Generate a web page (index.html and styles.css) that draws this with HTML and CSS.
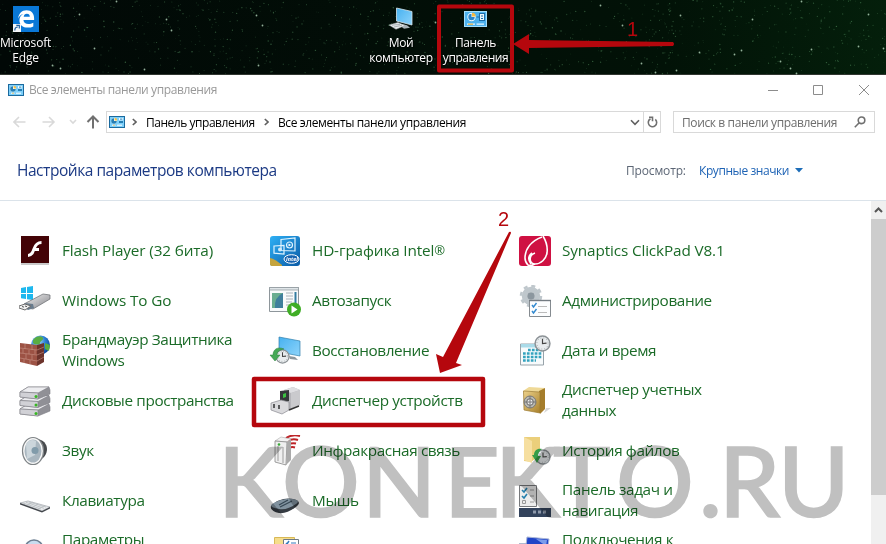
FILE: index.html
```
<!DOCTYPE html>
<html lang="ru">
<head>
<meta charset="utf-8">
<title>Все элементы панели управления</title>
<link rel="stylesheet" href="styles.css">
</head>
<body>
<svg width="0" height="0" class="defs">
  <defs>
    <linearGradient id="metal" x1="0" y1="0" x2="1" y2="1"><stop offset="0" stop-color="#f4f4f4"/><stop offset="1" stop-color="#85858a"/></linearGradient>
    <linearGradient id="sky" x1="0" y1="0" x2="1" y2="1"><stop offset="0" stop-color="#2eb0f5"/><stop offset="1" stop-color="#0b5ba6"/></linearGradient>
    <linearGradient id="screen" x1="0" y1="0" x2="1" y2="1"><stop offset="0" stop-color="#46b1f0"/><stop offset="1" stop-color="#8ed4fb"/></linearGradient>
    <linearGradient id="gold" x1="0" y1="0" x2="1" y2="1"><stop offset="0" stop-color="#edd28a"/><stop offset="1" stop-color="#a8802c"/></linearGradient>
    <radialGradient id="globe" cx=".35" cy=".3" r=".8"><stop offset="0" stop-color="#b8e2ff"/><stop offset=".5" stop-color="#2a7fd4"/><stop offset="1" stop-color="#0b3c8c"/></radialGradient>
    <symbol id="panel" viewBox="0 0 16 12" preserveAspectRatio="none">
      <rect width="16" height="12" fill="#1b6a9e"/><rect x="1" y="1" width="14" height="10" fill="#7ed0fa"/>
      <circle cx="5" cy="5" r="2.8" fill="#fff"/><path d="M5 5V2.2A2.8 2.8 0 1 0 7.8 5Z" fill="#267fb5"/><path d="M5.600 4.400V1.800A2.600 2.600 0 0 1 8.200 4.400Z" fill="#f5c04a"/>
      <rect x="10" y="2" width="4" height="2.3" fill="#f5fbff"/><rect x="11" y="2.6" width="2.4" height="1" fill="#267fb5"/><rect x="10" y="5" width="4" height="2" fill="#267fb5"/>
      <path d="M3 9.200h3.500M8 9.200h5" stroke="#fff"/><path d="M5 8.600v1.400" stroke="#f0b030"/>
    </symbol>
    <symbol id="panel-large" viewBox="0 0 23 16">
      <rect width="23" height="16" fill="#a6dffc"/><rect x="1" y="1" width="21" height="14" fill="#4db2ee"/>
      <circle cx="7.500" cy="6" r="4.200" fill="#f4fbff"/><path d="M7.500 6V2.800A3.200 3.200 0 1 0 10.700 6Z" fill="#2b86c9"/><path d="M8 5.500V1.800A3.700 3.700 0 0 1 11.700 5.500Z" fill="#f5b941"/>
      <path d="M12.500 6h2.500" stroke="#1d6ca6"/><rect x="15.500" y="2.500" width="5" height="7" fill="#eaf8ff" stroke="#1d6ca6"/><path d="M17 5h2M17 7.500h2" stroke="#1d6ca6"/>
      <path d="M3 13.200h8M12.500 13.200H20" stroke="#e9f7ff" stroke-width="1.300"/><path d="M4 13.200h5" stroke="#e5b44a" stroke-width="1.300"/>
    </symbol>
    <symbol id="clock" viewBox="0 0 16 16">
      <circle cx="8" cy="8" r="7" fill="#e8ecee" stroke="#8c9296" stroke-width="1.400"/><circle cx="8" cy="8" r="5.300" fill="none" stroke="#8c9296" stroke-width=".8" stroke-dasharray=".8 2"/><path d="M8 3.500V8l3.800-.4" fill="none" stroke="#444" stroke-width="1.100"/>
    </symbol>
  </defs>
</svg>

<header class="desktop">
  <svg class="stars" id="stars" width="886" height="75"></svg>
  <div class="shortcut edge">
    <svg width="26" height="26" viewBox="0 0 26 26"><rect width="26" height="26" fill="#0a78d7"/><path d="M5.200 12.600C5.600 7.400 8.900 4.200 13.500 4.200c5 0 7.600 3.500 7.600 8v1.900H10.400c.2 2.800 2.300 4 5 4 1.800 0 3.500-.5 4.900-1.300v3.600c-1.500.8-3.500 1.200-5.600 1.200-5 0-8.300-2.900-8.300-7.400 0-2.800 1.500-5 4-6.200-2.500.4-4.200 2-5.200 4.600zM10.700 10.800h6.100c0-2-1-3.100-2.900-3.100s-3 1.200-3.200 3.100z" fill="#fff"/><rect x="0" y="18" width="8" height="8" fill="#f4f6f8"/><path d="M1.800 24.500c0-2.500 1-3.500 3-3.500M3.300 19.400h3v3" fill="none" stroke="#1d5fa0" stroke-width="1.200"/></svg>
    <span>Microsoft</span><span>Edge</span>
  </div>
  <div class="shortcut pc">
    <svg width="26" height="24" viewBox="0 0 26 24"><path d="M8.500 1 24 4.500V18L8.500 14Z" fill="url(#screen)" stroke="#d6e4ec" stroke-width=".8"/><path d="M14 17l5 1.200 3 2.500-6 1-2.500-2z" fill="#a9b3b8"/><path d="M1 18l9-2.500 7 3-9 3.800z" fill="#e6eaec" stroke="#a7adb1" stroke-width=".5"/><path d="M4 18.200l8-.8M6 20l8-1.700" stroke="#abb2b6"/></svg>
    <span>Мой</span><span>компьютер</span>
  </div>
  <div class="shortcut cp">
    <svg width="23" height="16"><use href="#panel-large"/></svg>
    <span>Панель</span><span>управления</span>
  </div>
</header>

<main class="window">
  <div class="titlebar">
    <svg width="16" height="12"><use href="#panel"/></svg>
    <span class="title">Все элементы панели управления</span>
    <svg class="controls" width="104" height="12" viewBox="0 0 104 12" fill="none" stroke="#8c8c8c"><path d="M1 6.500h10M46.500 1.500h9v9h-9zM92 1l10 10M102 1 92 11"/></svg>
  </div>

  <nav class="navbar">
    <svg width="92" height="16" viewBox="0 0 92 16" fill="none" stroke="#d9d9d9" stroke-width="1.600"><path d="M6 3 1 8l5 5M1 8h11.500M36 3l5 5-5 5M41 8H29.500"/><path d="M57 6l3 3 3-3"/><path d="M74.500 8l5.500-5.500L85.500 8M80 3v11.500" stroke="#707070" stroke-width="2"/></svg>
    <div class="address">
      <svg width="16" height="12"><use href="#panel"/></svg>
      <svg class="sep" width="5" height="8" viewBox="0 0 5 8"><path d="M.8 1 4 4 .8 7"/></svg>
      <span class="crumb-root">Панель управления</span>
      <svg class="sep" width="5" height="8" viewBox="0 0 5 8"><path d="M.8 1 4 4 .8 7"/></svg>
      <span class="crumb-all">Все элементы панели управления</span>
      <svg class="drop" width="10" height="7" viewBox="0 0 10 7"><path d="M1 1.300l4 4 4-4"/></svg>
      <div class="refresh"><svg width="11" height="12" viewBox="0 0 11 12" fill="none" stroke="#707070" stroke-width="1.600"><path d="M3.500 2.800A4.200 4.200 0 1 0 8.300 3.400M2 1.200h3.500v4"/></svg></div>
    </div>
    <div class="search"><span>Поиск в панели управления</span>
      <svg width="12" height="12" viewBox="0 0 12 12" fill="none" stroke="#707070" stroke-width="1.600"><circle cx="7.500" cy="4.300" r="3.300"/><path d="M5.200 6.800.8 11.200"/></svg></div>
  </nav>

  <div class="heading">
    <h1>Настройка параметров компьютера</h1>
    <span class="view">Просмотр:</span>
    <a class="mode">Крупные значки</a>
    <svg width="8" height="5"><path d="M0 0h8L4 4.500z" fill="#1d6db8"/></svg>
  </div>

  <div class="content">
    <div class="grid">
      <div class="item latin"><svg viewBox="0 0 32 32"><rect x="2" y="2" width="28" height="28" fill="#c9c9c9"/><rect x="2" y="1" width="28" height="27" fill="#430306"/><path d="M22.500 7.500c-5 0-6.500 3.500-7.500 6.500-1.200 4-2.500 6.500-6 6.500" fill="none" stroke="#fff" stroke-width="3"/><path d="M14 14.500h6" stroke="#fff" stroke-width="3"/></svg><span>Flash Player (32 бита)</span></div>
      <div class="item latin"><svg viewBox="0 0 32 32"><rect x="1" y="1" width="30" height="30" rx="3" fill="url(#sky)"/><path d="M1 23q5 1 12 7v1H3q-2 0-2-2z" fill="#c5a43d"/><g fill="none" stroke="#dff4ff" stroke-width="1.200"><path d="M12 4.500 26 3v13l-14-.5z"/><path d="M5 11l10-.5V19l-10-.8z"/><circle cx="20.500" cy="10" r="3"/></g><path d="M19.500 8.500v3l2.600-1.500z" fill="#fff"/><circle cx="11" cy="14.500" r="2" fill="#cfeafa"/><ellipse cx="22.500" cy="24" rx="7.500" ry="4.300" fill="#1763b0" stroke="#fff"/><text class="intel" x="17" y="26">intel</text></svg><span>HD-графика Intel<small>®</small></span></div>
      <div class="item latin"><svg viewBox="0 0 32 32"><rect y="1" width="32" height="30" rx="3" fill="#cf1142"/><path d="M23 2C12 6 6 14 6 23c0 3 1 5 3 7 2 1 5 0 7-1M12 29c-4-5-2-9 1-11M24 1c3 5 5 10 4 17-1 6-6 11-12 11-4 0-6-4-4-8q1-2 4-3" fill="none" stroke="#fff" stroke-width="1.600"/></svg><span>Synaptics ClickPad V8.1</span></div>

      <div class="item latin"><svg viewBox="0 0 32 32"><path d="M2 3l5-1v6H2zM8 2l6-1v7H8zM2 9h5v5l-5-.8zM8 9h6v6l-6-.8z" fill="#1eb8ee"/><path d="M5 19 24 9l7 1v4L14 24l-6-1z" fill="url(#metal)" stroke="#66696d" stroke-width=".7"/><path d="M6 18l8 1 1 4-6 2-5-3z" fill="#687b8c"/><path d="M0 21l6-2 6 2-6 4-6-2z" fill="#f1f1f1" stroke="#6c6c6c"/><path d="M3 21.500l2 .6M6 21l2 .6" stroke="#555"/></svg><span>Windows To Go</span></div>
      <div class="item"><svg viewBox="0 0 32 32"><path d="M.5 2.500h29v24H.5z" fill="#f8fafb" stroke="#8e969b"/><path d="M.5 2.500h29v2.500H.5z" fill="#dfe5e8" stroke="#8e969b" stroke-width=".7"/><path d="M3 8h11v15H3z" fill="#3f7f9c"/><path d="M3 23V8h11Q5 12 6 23z" fill="#69ad90"/><path d="M17 8h7M17 11h7M17 14h7M17 17h6M17 20h3" stroke="#a8b2b8"/><path d="M26.500 7v11" stroke="#347ca0" stroke-width="2"/><circle cx="25" cy="24.500" r="7" fill="#3fad25"/><path d="M22.500 20.500v8l6-4z" fill="#fff"/></svg><span>Автозапуск</span></div>
      <div class="item"><svg viewBox="0 0 32 32"><circle cx="12" cy="11" r="6.500" fill="none" stroke="#bfc7cc" stroke-width="5.500"/><circle cx="12" cy="11" r="10" fill="none" stroke="#bfc7cc" stroke-width="2.500" stroke-dasharray="4 3.850"/><circle cx="12" cy="11" r="3.800" fill="#8c979f"/><path d="M10.500 15.500h21v16h-21z" fill="#fcfdfe" stroke="#858b90"/><path d="M10 15.500h22" stroke="#737b82" stroke-width="1.400"/><path d="M13 20l1.500 2 3-4M13 26l1.500 2 3-4" fill="none" stroke="#3289cf" stroke-width="1.400"/><path d="M19 21.500h9M19 27.500h9" stroke="#bbb"/></svg><span>Администрирование</span></div>

      <div class="item"><svg viewBox="0 0 32 32"><circle cx="21.500" cy="10" r="9.500" fill="url(#globe)"/><path d="M14 5c4-5 9-4 10-2s-3 3-3 5-5 2-7 0zM26 8l5 2-1 6-4-2zM14 14l7-2 2 5-8 2z" fill="#59ad43"/><path d="M1 8l17 2v21L1 27z" fill="#9c5244"/><path d="M18 10l7-2v19l-7 4z" fill="#6d342c"/><path d="M1 13l17 2 7-3M1 18l17 2 7-3M1 23l17 3 7-4M6 9v5M13 10v5M4 14v4M10 15v4M16 15v4M7 19v5M13 20v5M5 24v4M11 25v4" fill="none" stroke="#c99486" stroke-width=".6"/></svg><span>Брандмауэр Защитника<br>Windows</span></div>
      <div class="item"><svg viewBox="0 0 32 32"><path d="M10 2l21 4v15l-21-4z" fill="url(#screen)" stroke="#317fac" stroke-width=".7"/><path d="M20 21l6 1 3 3-8-1z" fill="#8d979e"/><use href="#clock" x="6" y="14" width="15" height="15"/><path d="M15 14C8 11 4 15 4 20H1l5 6 5-6H8c0-3 2-5 7-6z" fill="#45a956" stroke="#28813a" stroke-width=".5"/></svg><span>Восстановление</span></div>
      <div class="item"><svg viewBox="0 0 32 32"><path d="M1.500 9h23v21h-23z" fill="#f8fbfc" stroke="#98a3aa"/><path d="M2 9h22v3.500H2z" fill="#aadbe9"/><path d="M9 15h14M4 18.500h19M4 22h19M4 25.500h13" stroke="#34a3be" stroke-width="2.300" stroke-dasharray="2.700 1.200"/><use href="#clock" x="15" y="0" width="17" height="17"/></svg><span>Дата и время</span></div>

      <div class="item"><svg viewBox="0 0 32 32"><g id="drive" stroke="#808086" stroke-width=".6"><path d="M1 24l8-5h21l1 3v4l-12 5L1 29z" fill="#909096"/><path d="M1 24l8-5h21l-11 6z" fill="#ededf0"/><path d="M1 24l18 1v6L1 29z" fill="#d1d1d6"/><circle cx="17" cy="28.500" r="1.500" fill="#37b722" stroke="none"/></g><use href="#drive" y="-8.500"/><use href="#drive" y="-17"/></svg><span>Дисковые пространства</span></div>
      <div class="item"><svg viewBox="0 0 32 32"><path d="M15 5l9-3 7 3v15l-12 5-4-4z" fill="#b6b6ba"/><path d="M15 5l9-3 7 3-9 3z" fill="#dedee1"/><path d="M22 8l9-3v15l-9 4z" fill="#cacacd"/><path d="M11 6l9-1v11l-9 2z" fill="#35383a"/><path d="M14 9l3-1v4l-3 1z" fill="#3bc341"/><path d="M2 18 12 15l8 2v8l-7 4-11-4z" fill="#d9d9dc" stroke="#898990" stroke-width=".7"/><path d="M5 19v4M10 20v4" stroke="#3a3b3d" stroke-width="1.600"/><path d="M20 25l10-4" stroke="#333" stroke-width="1.500"/></svg><span>Диспетчер устройств</span></div>
      <div class="item"><svg viewBox="0 0 32 32"><path d="M25 28l7-5h-5z" fill="#d8d8d8"/><path d="M4 6l6-4 16 1-4 4z" fill="#efd997"/><path d="M20 6l6-3v21l-5 5z" fill="#a57d2b"/><path d="M4.500 6l16.500 1v21L5 25z" fill="url(#gold)" stroke="#9b782c" stroke-width=".7"/><circle cx="11" cy="17" r="6" fill="#b9b9b2" stroke="#777"/><circle cx="11" cy="17" r="3.300" fill="#eee" stroke="#666"/><path d="M5 17h12M11 11v12" stroke="#777"/></svg><span>Диспетчер учетных<br>данных</span></div>

      <div class="item"><svg viewBox="0 0 32 32"><path d="M15 4c9-1 13 5 13 10s-3 10-10 12z" fill="#484b4e"/><ellipse cx="14" cy="16" rx="10.500" ry="13.500" fill="#f7f7f7" stroke="#7f8487" stroke-width="1.200"/><ellipse cx="14" cy="16" rx="8.500" ry="11.500" fill="#a9b6bf"/><path d="M7 9q4-6 10-3l-1 14-8 4z" fill="#ccd6dc"/><circle cx="16" cy="15.500" r="3.500" fill="#819baa"/></svg><span>Звук</span></div>
      <div class="item"><svg viewBox="0 0 32 32"><path d="M17 3q6-4 14-2M18 6q6-3 11-1M19 9.500q4-2 8-1M20 13q3-1.500 6-.5" fill="none" stroke="#bd2428" stroke-width="2"/><path d="M6 6l6-4 10 2-4 3z" fill="#f3f3f3" stroke="#aaa" stroke-width=".6"/><path d="M6 6l12 1-1 23-11-3z" fill="#efefef" stroke="#888" stroke-width=".8"/><path d="M18 7l4-3v21l-5 5z" fill="#aaa"/><path d="M9 11v15M14 12v16" stroke="#b0b0b0" stroke-width="1.300"/><circle cx="10" cy="9.500" r="1.300" fill="#37a935"/></svg><span>Инфракрасная связь</span></div>
      <div class="item"><svg viewBox="0 0 32 32"><path d="M5 2h16v18L12 27l-7-1z" fill="#ebcf7b"/><path d="M5 2l8 4v22l-8-3z" fill="#f6dfa0"/><use href="#clock" x="16" y="14" width="16" height="16"/><path d="M23 14c-5-1-8 2-8 6h-2l5 8 4-7h-3q0-4 4-7z" fill="#369e48"/></svg><span>История файлов</span></div>

      <div class="item"><svg viewBox="0 0 32 32"><path d="M1 18l8-2 22 6-8 4z" fill="#e8eaec" stroke="#a0a5aa" stroke-width=".7"/><path d="M1 18l22 8 8-4v1.500l-8 4L1 19.500z" fill="#42464b"/><path d="M4 18l18 6M7 17.300l18 6M10 17l17 5M9 20l5-3M14 22l5-3M19 24l6-3" stroke="#b7bcc0" stroke-width=".8"/></svg><span>Клавиатура</span></div>
      <div class="item"><svg viewBox="0 0 32 32"><path d="M2 21C7 15 17 12 24 14c6 1 7 4 5 6-5 5-13 9-19 8-6-1-9-4-8-7z" fill="#353b42"/><path d="M2 20C8 15 18 13 24 14c6 1 6 3 3 5-6 4-11 6-17 5-5-1-8-2-8-4z" fill="#81929f"/><path d="M10 20l9-5M11 22l12-6" stroke="#364754" stroke-width="1.200"/></svg><span>Мышь</span></div>
      <div class="item"><svg viewBox="0 0 32 32"><path d="M.5.500h17v21H.5z" fill="#ededed" stroke="#77797c"/><path d="M3 5l2 2 3-4M3 11l2 2 3-4" fill="none" stroke="#247fac" stroke-width="1.600"/><path d="M3.500 15.500h3v3h-3z" fill="none" stroke="#999"/><path d="M11 5h4M11 11h4M11 17h4" stroke="#999"/><path d="M0 23h32v9H0z" fill="#33435c"/><path d="M14 27h13" stroke="#8f9aab" stroke-width="3" stroke-dasharray="3 2"/></svg><span>Панель задач и<br>навигация</span></div>

      <div class="item"><svg viewBox="0 0 32 32"><circle cx="15" cy="14" r="9" fill="#c9dcef" stroke="#6e8093" stroke-width="1.500"/></svg><span>Параметры<br>индексирования</span></div>
      <div class="item"><svg viewBox="0 0 32 32"><path d="M5.500 2.500h20v28h-20z" fill="#f6dd8b" stroke="#d8b957"/><path d="M14.500 4.500h15v22h-15z" fill="#fff" stroke="#6f7b85"/><path d="M17 8l1 1 2-3" fill="none" stroke="#347bbd" stroke-width="1.500"/><path d="M22 8h5" stroke="#347bbd"/></svg><span>Параметры Проводника</span></div>
      <div class="item"><svg viewBox="0 0 32 32"><path d="M0 8h10v10H0z" fill="#b0bbd1"/><path d="M8 2l22 2-2 16-22-2z" fill="#2145c7" stroke="#aab6d8"/><path d="M17 4l11 1-1 6z" fill="#7b9cec"/></svg><span>Подключения к<br>удаленным</span></div>
    </div>
    <div class="scrollbar"><div class="up"><svg width="9" height="6" viewBox="0 0 9 6"><path d="M1 5l3.500-3.500L8 5" fill="none" stroke="#555" stroke-width="2"/></svg></div><div class="thumb"></div></div>
  </div>
</main>

<svg class="watermark" width="886" height="544"><text x="218 282 362 444 495 553 616 699 719 778" y="516.500">KONEKTO.RU</text></svg>

<svg class="marks" width="886" height="544">
  <g fill="none" stroke="#b5070d" stroke-width="4" stroke-linejoin="round"><rect x="439" y="6.500" width="73" height="64"/><rect x="254" y="379" width="229" height="46" stroke-width="4.500"/></g>
  <g fill="#b5070d"><path d="M513 44l16-10v6l144 2q2 2 0 4L529 48v6z"/><path d="M440 373l-4-19 7 3 66-125q2-1 2 1l-55 130 6 2z"/></g>
  <text class="one" x="627" y="35.500">1</text><text x="498" y="226">2</text>
</svg>
<script src="stars.js"></script>
</body>
</html>
```

FILE: styles.css
```
* { box-sizing: border-box; }
body { margin: 0; width: 886px; height: 544px; overflow: hidden; position: relative; background: #fff; font-family: "Open Sans", "Noto Sans", sans-serif; }
svg { flex: none; display: block; }
.defs { position: absolute; }

.desktop { position: relative; height: 75px; display: flex; align-items: flex-start; background: linear-gradient(90deg, #010806, #020e07 45%, #021207 75%, #041f0b); border-bottom: 1px solid #303630; }
.stars { position: absolute; left: 0; top: 0; }
.shortcut { position: relative; display: flex; flex-direction: column; align-items: center; white-space: nowrap; font-size: 12px; line-height: 15px; letter-spacing: -0.35px; color: #fff; text-shadow: 1px 1px 1px #000; }
.shortcut svg { margin-bottom: 4px; }
.edge { width: 51px; padding-top: 6px; letter-spacing: -0.2px; }
.edge svg { margin-bottom: 3px; }
.pc { width: 70px; margin-left: 315px; padding-top: 7px; }
.cp { width: 73px; margin-left: 3px; padding-top: 11px; letter-spacing: -0.45px; }
.cp svg { margin-bottom: 8px; }

.window { height: 469px; display: flex; flex-direction: column; }
.titlebar { height: 29px; display: flex; align-items: center; padding: 0 15px 0 8px; font-size: 12px; letter-spacing: -0.4px; color: #999; }
.title { margin-left: 5px; white-space: nowrap; }
.controls { margin-left: auto; }
.navbar { height: 36px; display: flex; align-items: center; padding-left: 13px; font-size: 12px; letter-spacing: -0.4px; }
.address { width: 555px; height: 22px; margin-left: 1px; border: 1px solid #d9d9d9; display: flex; align-items: center; padding-left: 2px; white-space: nowrap; }
.sep, .drop { fill: none; stroke: #606060; stroke-width: 1.6; }
.address .sep { margin: 0 9px 0 7px; }
.crumb-root { width: 111px; letter-spacing: -0.47px; }
.crumb-all { flex: 1; }
.refresh { height: 20px; width: 17px; margin-left: 3px; border-left: 1px solid #d9d9d9; display: flex; align-items: center; justify-content: center; }
.search { width: 202px; height: 22px; margin-left: 12px; border: 1px solid #d9d9d9; display: flex; align-items: center; justify-content: space-between; padding: 0 8px; letter-spacing: -0.38px; color: #6d6d6d; white-space: nowrap; }

.heading { height: 61px; border-bottom: 1px solid #dbe3ea; display: flex; align-items: center; padding-left: 17px; font-size: 12px; color: #5c6675; white-space: nowrap; }
h1 { margin: 0; width: 609px; font-size: 15.5px; font-weight: 400; letter-spacing: -0.46px; color: #1c3a84; }
.view { width: 73px; letter-spacing: -0.15px; }
.mode { width: 96px; letter-spacing: -0.42px; color: #1e63b5; }

.content { flex: 1; min-height: 0; display: flex; overflow: hidden; }
.grid { flex: 1; display: grid; grid-template-columns: repeat(3, 250px); grid-auto-rows: 50px; padding: 25px 0 0 19px; }
.item { display: flex; align-items: center; font-size: 15.3px; line-height: 21px; letter-spacing: -0.38px; color: #1b6b28; white-space: nowrap; }
.item.latin { letter-spacing: -0.13px; }
.item > span { margin-bottom: 2px; }
.item > svg { width: 32px; height: 32px; margin-right: 11px; }
.item small { font-size: 13px; line-height: 1; vertical-align: 1px; }
.intel { font: italic bold 5.5px "Open Sans", sans-serif; letter-spacing: 0; fill: #fff; }
.scrollbar { width: 15px; background: #f0f0f0; display: flex; flex-direction: column; }
.up { height: 18px; display: flex; align-items: center; justify-content: center; }
.thumb { height: 276px; background: #cdcdcd; }

.watermark { position: absolute; left: 0; top: 0; mix-blend-mode: multiply; filter: blur(0.6px); }
.watermark text { font: 500 97px Lato, sans-serif; fill: #c0c0c0; stroke: #c0c0c0; stroke-width: 1.5px; }
.marks { position: absolute; left: 0; top: 0; }
.marks text { font: 20px "Liberation Sans", sans-serif; fill: #b5070d; }
```

FILE: stars.js
```
const NS = "http://www.w3.org/2000/svg";
const sky = document.getElementById("stars");
function star(x, y, r, fill, opacity) {
  const c = document.createElementNS(NS, "circle");
  c.setAttribute("cx", x);
  c.setAttribute("cy", y);
  c.setAttribute("r", r);
  c.setAttribute("fill", fill);
  c.setAttribute("opacity", opacity);
  sky.appendChild(c);
}
let seed = 77;
function rnd() {
  seed = (seed * 16807) % 2147483647;
  return seed / 2147483647;
}
for (let i = 0; i < 1100; i++) {
  star(rnd() * 886, rnd() * 74, 0.4 + rnd() * 0.35, "#5f9f6a", 0.15 + rnd() * 0.4);
}
[[116,1],[256,15],[262,25],[79,14],[166,19],[94,48],[144,69],[52,65],[60,68],[171,30],[258,65],[435,22],[622,25],[600,5],[680,15],[752,19],[801,1],[741,50],[734,54],[699,52],[780,61],[790,68],[811,49],[868,14],[858,46],[883,48],[641,63],[655,72],[676,70],[796,73]].forEach(([x, y]) => star(x + 0.5, y + 0.5, 0.9, "#c3e6c9", 0.75));
```
